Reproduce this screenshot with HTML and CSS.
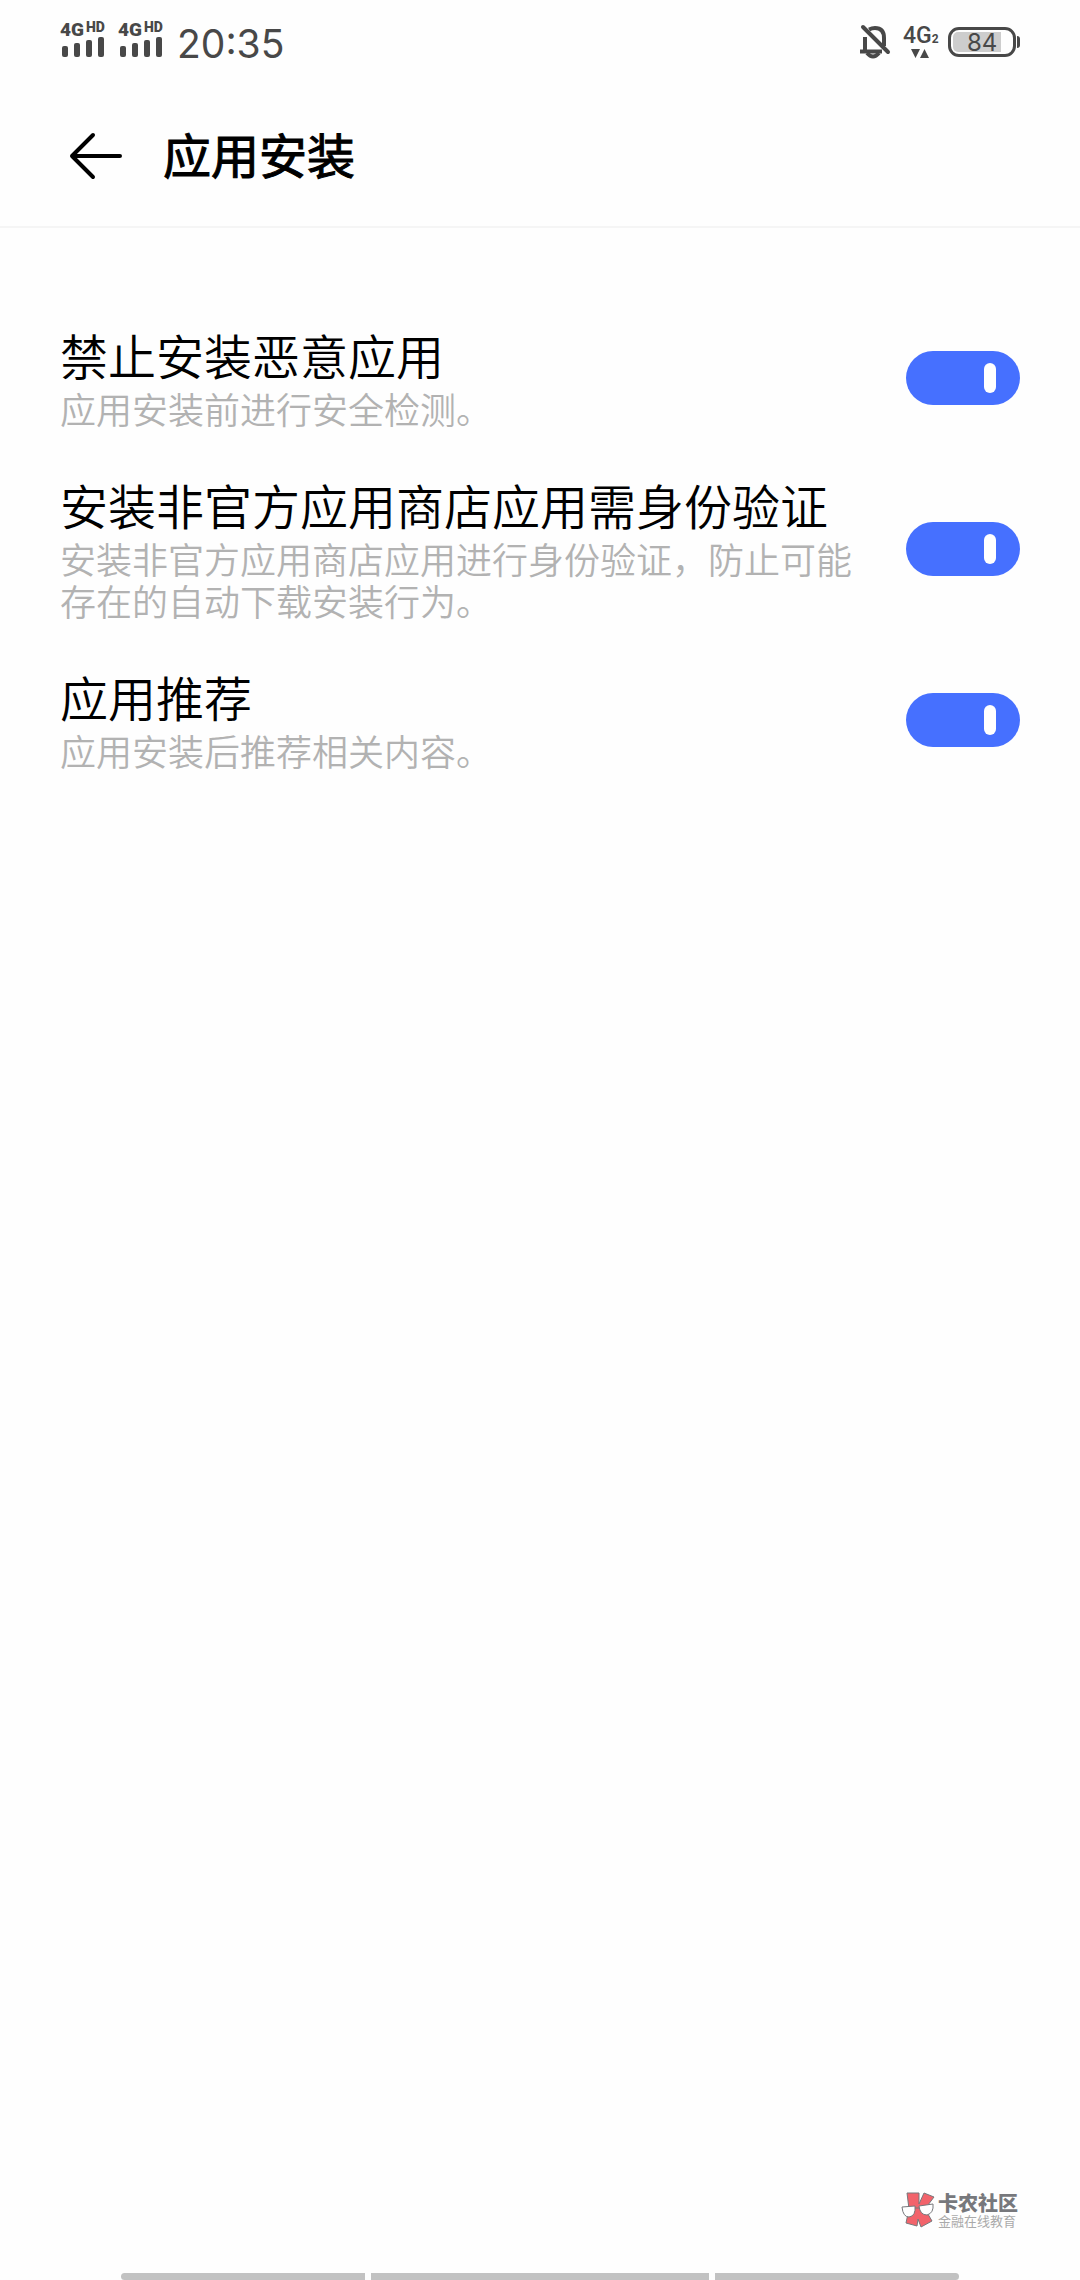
FILE: index.html
```html
<!DOCTYPE html>
<html lang="zh-CN">
<head>
  <meta charset="UTF-8">
  <meta name="viewport" content="width=device-width, initial-scale=1">
  <title>应用安装</title>
  <link rel="stylesheet" href="styles.css">
</head>
<body>
  <div class="status-bar">
    <div class="status-left">
      <div class="signal">
        <div class="signal-label">4G<span class="hd">HD</span></div>
        <div class="bars"><i class="b1"></i><i class="b2"></i><i class="b3"></i><i class="b4"></i></div>
      </div>
      <div class="signal">
        <div class="signal-label">4G<span class="hd">HD</span></div>
        <div class="bars"><i class="b1"></i><i class="b2"></i><i class="b3"></i><i class="b4"></i></div>
      </div>
      <div class="clock">20:35</div>
    </div>
    <div class="status-right">
      <svg class="bell" width="32" height="36" viewBox="0 0 32 36" fill="none" stroke="#484848">
        <path d="M6 27V13M10 5.500Q13 4 16 4Q25 4 25 14V22" stroke-width="4"/>
        <path d="M1 27.500H23" stroke-width="4"/>
        <path d="M8 29Q14 36 20 29" stroke-width="4"/>
        <path d="M4 3L29 28" stroke-width="4" stroke-linecap="round"/>
      </svg>
      <div class="network">
        <div class="network-label">4G<span class="sim">2</span></div>
        <svg width="18" height="10" viewBox="0 0 18 10" fill="#484848">
          <path d="M0 0H9L4.500 9ZM9 9H18L13.500 0Z"/>
        </svg>
      </div>
      <div class="battery">
        <div class="battery-body"><span class="battery-level">84</span></div>
        <div class="battery-tip"></div>
      </div>
    </div>
  </div>

  <header class="header">
    <button class="back" type="button" aria-label="返回">
      <svg width="54" height="48" viewBox="0 0 54 48" fill="none" stroke="#000" stroke-width="4" stroke-linecap="round" stroke-linejoin="round">
        <path d="M24 3L3 24L24 45M3 24H51"/>
      </svg>
    </button>
    <h1>应用安装</h1>
  </header>

  <main class="settings">
    <div class="row">
      <label class="text" for="malware">
        <span class="title">禁止安装恶意应用</span>
        <span class="desc">应用安装前进行安全检测。</span>
      </label>
      <input class="switch" type="checkbox" id="malware" checked>
    </div>
    <div class="row">
      <label class="text" for="verify">
        <span class="title">安装非官方应用商店应用需身份验证</span>
        <span class="desc">安装非官方应用商店应用进行身份验证，防止可能存在的自动下载安装行为。</span>
      </label>
      <input class="switch" type="checkbox" id="verify" checked>
    </div>
    <div class="row">
      <label class="text" for="recommend">
        <span class="title">应用推荐</span>
        <span class="desc">应用安装后推荐相关内容。</span>
      </label>
      <input class="switch" type="checkbox" id="recommend" checked>
    </div>
  </main>

  <div class="brand">
    <svg width="34" height="36" viewBox="0 0 34 36" stroke="#77787c" stroke-width="1">
      <path d="M6 1H18V12L23 1L33 5L24 17L31 29L20 35L17 27L16 34L5 31L8 17Z" fill="#f2636b"/>
      <path d="M1 15L14 14Q15 24 8 25Q2 25 1 15ZM18 14L32 12Q33 21 26 23Q19 23 18 14ZM14 16L18 16" fill="#fff"/>
    </svg>
    <div class="brand-text">
      <div class="brand-name">卡农社区</div>
      <div class="brand-sub">金融在线教育</div>
    </div>
  </div>

  <nav class="nav-bar"><i></i><i></i><i></i></nav>
</body>
</html>
```

FILE: styles.css
```css
* {
  box-sizing: border-box;
}
body {
  margin: 0;
  min-height: 100vh;
  display: flex;
  flex-direction: column;
  background: #fefefe;
  color: #000;
  font-family: "Noto Sans CJK SC", sans-serif;
}

/* status bar */
.status-bar {
  display: flex;
  justify-content: space-between;
  height: 84px;
  padding: 0 60px;
  color: #484848;
}
.status-left,
.status-right {
  display: flex;
}
.signal {
  width: 58px;
  padding-top: 20px;
}
.signal-label,
.network-label {
  display: flex;
  font-family: Roboto, sans-serif;
}
.signal-label {
  font-size: 19px;
  font-weight: 900;
  line-height: 20px;
}
.hd {
  margin-left: 2px;
  font-size: 14px;
  line-height: 14px;
}
.bars {
  display: flex;
  align-items: flex-end;
  gap: 6px;
  height: 17px;
  padding-left: 2px;
}
.bars i {
  width: 6px;
  border-radius: 2px;
  background: #484848;
}
.b1 { height: 11px; }
.b2 { height: 14px; }
.b3 { height: 17px; }
.b4 { height: 20px; }
.clock {
  padding-left: 1px;
  font-family: Inter, sans-serif;
  font-size: 39px;
  line-height: 88px;
}
.bell {
  margin-top: 24px;
}
.network {
  width: 36px;
  margin-left: 12px;
  padding-top: 23px;
}
.network-label {
  font-size: 23px;
  font-weight: 500;
  line-height: 26px;
}
.network svg {
  display: block;
  margin: 0 0 0 8px;
}
.sim {
  font-size: 12px;
  font-weight: bold;
  line-height: 32px;
}
.network-label {
  height: 26px;
}
.battery {
  display: flex;
  align-items: center;
  height: 30px;
  margin: 27px 0 0 9px;
}
.battery-body {
  width: 68px;
  height: 30px;
  padding: 2px;
  border: 3px solid #484848;
  border-radius: 11px;
}
.battery-level {
  display: block;
  width: 48px;
  height: 20px;
  padding-left: 14px;
  border-radius: 5px 0 0 5px;
  background: #cdcdcd;
  font-family: Inter, sans-serif;
  font-size: 24px;
  line-height: 21px;
}
.battery-tip {
  width: 3px;
  height: 12px;
  margin-left: 1px;
  border-radius: 0 3px 3px 0;
  background: #484848;
}

/* header */
.header {
  display: flex;
  align-items: center;
  height: 144px;
  padding: 2px 60px 0 69px;
  border-bottom: 2px solid #f5f5f5;
}
.back {
  display: flex;
  padding: 0;
  border: 0;
  background: none;
}
h1 {
  margin: 0 0 0 40px;
  padding-bottom: 6px;
  font-size: 48px;
  font-weight: 400;
  line-height: 66px;
  -webkit-text-stroke: 1px #000;
}

/* settings list */
.settings {
  display: flex;
  flex-direction: column;
  gap: 36px;
  padding: 93px 60px 0;
}
.row {
  display: flex;
  align-items: center;
  justify-content: space-between;
  gap: 40px;
}
.text {
  padding-bottom: 6px;
}
.title,
.desc {
  display: block;
}
.title {
  font-size: 48px;
  font-weight: 350;
  line-height: 66px;
}
.desc {
  color: #b2b2b2;
  font-size: 36px;
  font-weight: 350;
  line-height: 42px;
}
.switch {
  appearance: none;
  flex: none;
  display: flex;
  align-items: center;
  width: 114px;
  height: 54px;
  margin: 0;
  padding: 0 24px;
  border-radius: 27px;
  background: #c8c8c8;
}
.switch::before {
  content: "";
  width: 12px;
  height: 30px;
  border-radius: 6px;
  background: #fff;
}
.switch:checked {
  justify-content: flex-end;
  background: #4670ff;
}

/* bottom */
.brand {
  display: flex;
  align-items: center;
  align-self: flex-end;
  gap: 3px;
  margin: auto 62px 45px 0;
}
.brand-name {
  color: #77787c;
  font-size: 20px;
  font-weight: 900;
  line-height: 22px;
}
.brand-sub {
  color: #aaa;
  font-size: 13px;
  line-height: 14px;
}
.nav-bar {
  display: grid;
  grid-template-columns: 244fr 338fr 244fr;
  gap: 6px;
  padding: 0 121px;
}
.nav-bar i {
  height: 7px;
  background: #c2c2c2;
}
.nav-bar i:first-child {
  border-radius: 4px 0 0 4px;
}
.nav-bar i:last-child {
  border-radius: 0 4px 4px 0;
}
```
